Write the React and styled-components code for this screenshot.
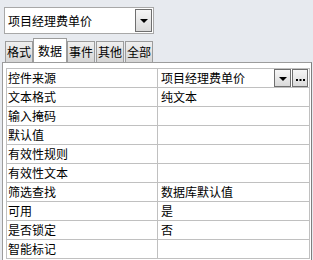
import React from "react";
import styled, { createGlobalStyle } from "styled-components";

const GlobalStyle = createGlobalStyle`
  * {
    box-sizing: border-box;
  }
  html, body {
    margin: 0;
    background: #e7eaef;
    font-family: "Noto Sans CJK SC", "Noto Sans", sans-serif;
    font-size: 12px;
    color: #000;
  }
`;

const Page = styled.div`
  padding-top: 7px;
`;

const Combo = styled.div`
  display: flex;
  align-items: center;
  margin-left: 4px;
  width: 150px;
  height: 27px;
  border: 1px solid #a8a8a8;
  background: #fff;
`;

const ComboText = styled.span`
  flex: 1;
  padding-left: 3px;
  line-height: 18px;
`;

const PushButton = styled.div`
  display: flex;
  align-items: center;
  justify-content: center;
  width: ${(p) => p.w}px;
  height: ${(p) => p.h}px;
  margin-right: 1px;
  border: 1px solid #6f6f6f;
  background: linear-gradient(#f6f6f6, #dadada);
`;

const Arrow = styled.span`
  width: 0;
  height: 0;
  border-left: 4px solid transparent;
  border-right: 4px solid transparent;
  border-top: 4px solid #000;
  margin-top: 1px;
`;

const Ellipsis = () => (
  <svg width="9" height="4" viewBox="0 0 9 4" style={{ marginTop: 3 }}>
    <rect x="0" y="1" width="2" height="2" fill="#000" />
    <rect x="3.5" y="1" width="2" height="2" fill="#000" />
    <rect x="7" y="1" width="2" height="2" fill="#000" />
  </svg>
);

const Tabs = styled.div`
  display: flex;
  align-items: flex-end;
  height: 24px;
  margin-top: 4px;
  padding-left: 5px;
`;

const Tab = styled.div`
  display: flex;
  align-items: center;
  height: ${(p) => (p.active ? 24 : 21)}px;
  padding: 0 ${(p) => (p.active ? 4 : 1)}px;
  margin-left: ${(p) => (p.active ? -1 : 0)}px;
  margin-right: ${(p) => (p.active ? 0 : 1)}px;
  border: 1px solid #9c9c9c;
  border-bottom: none;
  background: ${(p) =>
    p.active ? "#fff" : "linear-gradient(#efefef, #d5d5d5)"};
  line-height: 16px;
`;

const Panel = styled.div`
  margin-left: 2px;
  width: 310px;
  border: 1px solid #9c9c9c;
  border-right-color: #7f7f7f;
  background: #fff;
  padding: 5px 1px 6px 3px;
`;

const Sheet = styled.div`
  border: 1px solid #c0c0c0;
  border-bottom: none;
`;

const Row = styled.div`
  display: grid;
  grid-template-columns: 151px 1fr;
  height: 19px;
  border-bottom: 1px solid #c0c0c0;
`;

const Label = styled.div`
  border-right: 1px solid #c0c0c0;
  padding-left: 1px;
  line-height: 18px;
  white-space: nowrap;
`;

const Value = styled.div`
  display: flex;
  align-items: center;
  padding-left: 3px;
  line-height: 18px;
  white-space: nowrap;
`;

const ValueText = styled.span`
  flex: 1;
`;

const tabs = ["格式", "数据", "事件", "其他", "全部"];

const rows = [
  ["控件来源", "项目经理费单价", true],
  ["文本格式", "纯文本"],
  ["输入掩码", ""],
  ["默认值", ""],
  ["有效性规则", ""],
  ["有效性文本", ""],
  ["筛选查找", "数据库默认值"],
  ["可用", "是"],
  ["是否锁定", "否"],
  ["智能标记", ""],
];

export default function App() {
  return (
    <Page>
      <GlobalStyle />
      <Combo>
        <ComboText>项目经理费单价</ComboText>
        <PushButton w={17} h={23}>
          <Arrow />
        </PushButton>
      </Combo>
      <Tabs>
        {tabs.map((t) => (
          <Tab key={t} active={t === "数据"}>
            {t}
          </Tab>
        ))}
      </Tabs>
      <Panel>
        <Sheet>
          {rows.map(([label, value, picker]) => (
            <Row key={label}>
              <Label>{label}</Label>
              <Value>
                <ValueText>{value}</ValueText>
                {picker && (
                  <>
                    <PushButton w={17} h={18}>
                      <Arrow />
                    </PushButton>
                    <PushButton w={16} h={18}>
                      <Ellipsis />
                    </PushButton>
                  </>
                )}
              </Value>
            </Row>
          ))}
        </Sheet>
      </Panel>
    </Page>
  );
}
